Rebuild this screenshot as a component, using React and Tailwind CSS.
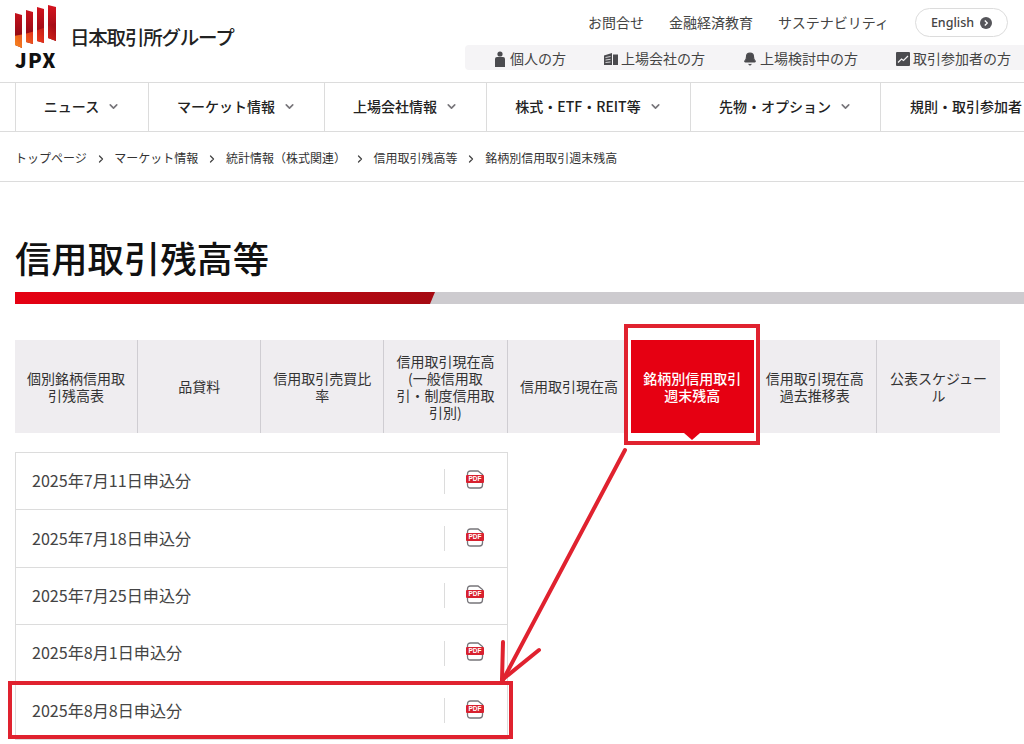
import React from "react";
import { ChevronDown, ChevronRight, Bell } from "lucide-react";

function Logo() {
  return (
    <div className="flex w-[55px] flex-col">
      <svg width="44" height="45" viewBox="14 4 44 45" className="ml-[-1px] mt-[4px]">
        <defs>
          <linearGradient id="jpxbase" x1="0" y1="0" x2="0" y2="1">
            <stop offset="0" stopColor="#d8141f" />
            <stop offset="0.75" stopColor="#8f0a14" />
          </linearGradient>
          <linearGradient id="jpxswoosh" gradientUnits="userSpaceOnUse" x1="50" y1="22" x2="18" y2="48">
            <stop offset="0" stopColor="#a80c16" />
            <stop offset="0.45" stopColor="#e2301a" />
            <stop offset="1" stopColor="#f58220" />
          </linearGradient>
          <clipPath id="jpxbars">
            <polygon points="15,13 22,15 22,48 15,45" />
            <polygon points="26,10 33,12 33,44 26,42" />
            <polygon points="37,7 44,9 44,43 37,41" />
            <polygon points="48,5 56,7 56,41 48,38" />
          </clipPath>
        </defs>
        <g clipPath="url(#jpxbars)">
          <rect x="14" y="4" width="44" height="45" fill="url(#jpxbase)" />
          <path d="M14 36Q35 33 57 22V49H14z" fill="url(#jpxswoosh)" />
        </g>
      </svg>
      <span className="mt-[1px] text-[20px] font-black leading-[20px] tracking-[1.2px] text-[#111]">JPX</span>
    </div>
  );
}

function PersonIcon() {
  return (
    <svg width="14" height="16" viewBox="0 0 14 16" fill="#4b4b4f">
      <circle cx="7" cy="3" r="2.6" />
      <path d="M2 8a2 2 0 0 1 2-2h6a2 2 0 0 1 2 2v8H2z" />
    </svg>
  );
}
function BuildingIcon() {
  return (
    <svg width="14" height="14" viewBox="0 0 14 14" fill="#4b4b4f">
      <path d="M0 3.5 8 1v12H0z" />
      <path d="M9 2.5h5V13H9z" />
      <path d="M1.5 5.5 6.5 4.5M1.5 8 6.5 7.3M1.5 10.5 6.5 10" stroke="#f5f4f6" strokeWidth="0.8" />
    </svg>
  );
}
function ChartIcon() {
  return (
    <svg width="14" height="14" viewBox="0 0 14 14">
      <rect width="14" height="14" rx="1" fill="#4b4b4f" />
      <path d="M2 10.5 5.5 7l2 1.5L12 4" stroke="#f5f4f6" strokeWidth="1.2" fill="none" />
    </svg>
  );
}
function PdfIcon() {
  return (
    <svg width="18" height="19" viewBox="0 0 18 19" className="block">
      <path d="M1.5 4q0-3 3-3h7.5l4.5 3.5v10.5q0 3-3 3h-9q-3 0-3-3z" fill="#fff" stroke="#77757a" strokeWidth="1.3" />
      <rect x="0" y="5" width="18" height="8" rx="1" fill="#d8212f" />
      <text x="9" y="11.4" textAnchor="middle" fontSize="6.5" fontWeight="700" fill="#fff" fontFamily="Liberation Sans, sans-serif">PDF</text>
    </svg>
  );
}

const nav = [
  ["ニュース", "w-[133px] justify-center", true],
  ["マーケット情報", "w-[176px] justify-center", true],
  ["上場会社情報", "w-[162px] justify-center", true],
  ["株式・ETF・REIT等", "w-[204px] justify-center", true],
  ["先物・オプション", "w-[190px] justify-center", true],
  ["規則・取引参加者", "w-[144px] justify-start pl-[29px]", false],
];

const crumbs = ["トップページ", "マーケット情報", "統計情報（株式関連）", "信用取引残高等", "銘柄別信用取引週末残高"];

const tabs = [
  "個別銘柄信用取引残高表",
  "品貸料",
  "信用取引売買比率",
  "信用取引現在高(一般信用取引・制度信用取引別)",
  "信用取引現在高",
  "銘柄別信用取引週末残高",
  "信用取引現在高過去推移表",
  "公表スケジュール",
];

const rows = ["2025年7月11日申込分", "2025年7月18日申込分", "2025年7月25日申込分", "2025年8月1日申込分", "2025年8月8日申込分"];

export default function App() {
  return (
    <div className="relative h-[744px] w-[1024px] overflow-hidden bg-white text-[#333] [font-family:'Noto_Sans_CJK_JP','Noto_Sans',sans-serif]">
      <header className="flex h-[83px] justify-between border-b border-[#dcdcdc]">
        <div className="flex pl-[15px]">
          <Logo />
          <span className="mt-[24px] text-[19.5px] font-medium leading-[26px] tracking-[-1.2px] text-[#222]">日本取引所グループ</span>
        </div>
        <div className="flex w-[559px] flex-col items-end">
          <div className="mt-[8px] flex h-[29px] items-center pr-[16px] text-[14px] text-[#444]">
            <span className="ml-[1px]">お問合せ</span>
            <span className="ml-[25px]">金融経済教育</span>
            <span className="ml-[25px]">サステナビリティ</span>
            <span className="ml-[26px] flex h-[29px] w-[93px] items-center justify-center gap-[6px] rounded-full border border-[#dcdcdc] pt-[1px] text-[12.5px] font-medium [font-family:'Noto_Sans',sans-serif]">
              English
              <svg width="12" height="12" viewBox="0 0 12 12">
                <circle cx="6" cy="6" r="6" fill="#55555a" />
                <path d="M4.8 3.5 7.3 6 4.8 8.5" stroke="#fff" strokeWidth="1.3" fill="none" />
              </svg>
            </span>
          </div>
          <div className="mt-[8px] flex h-[25px] w-full items-center rounded-l-[4px] bg-[#f5f4f6] pl-[28px] pt-[2px] text-[14px] text-[#444]">
            <span className="flex items-center gap-[3px]"><PersonIcon />個人の方</span>
            <span className="ml-[38px] flex items-center gap-[3px]"><BuildingIcon />上場会社の方</span>
            <span className="ml-[38px] flex items-center gap-[3px]"><Bell size={14} fill="#4b4b4f" stroke="#4b4b4f" />上場検討中の方</span>
            <span className="ml-[38px] flex items-center gap-[3px]"><ChartIcon />取引参加者の方</span>
          </div>
        </div>
      </header>

      <nav className="flex h-[49px] overflow-hidden border-b border-[#dcdcdc] pl-[15px]">
        {nav.map(([label, w, chev]) => (
          <div key={label} className={`flex h-full shrink-0 items-center gap-[8px] whitespace-nowrap border-l border-[#dcdcdc] pb-[2px] text-[14px] font-medium text-[#222] ${w}`}>
            <span>{label}</span>
            {chev && <ChevronDown size={13} strokeWidth={3} className="text-[#77757a]" />}
          </div>
        ))}
      </nav>

      <div className="flex h-[50px] items-center border-b border-[#dcdcdc] pl-[15px] pt-[2px] text-[12px] text-[#333]">
        {crumbs.map((c, i) => (
          <React.Fragment key={c}>
            {i > 0 && <ChevronRight size={12} strokeWidth={2.5} className="mx-[7.8px] mt-[2px] text-[#444]" />}
            <span>{c}</span>
          </React.Fragment>
        ))}
      </div>

      <h1 className="mt-[48px] pl-[15px] text-[36.3px] font-medium leading-[54px] text-[#111]">信用取引残高等</h1>

      <div className="relative mt-[8px] ml-[15px] h-[12px] bg-[#cdcbcf]">
        <div className="absolute left-0 top-0 h-full w-[420px] bg-[linear-gradient(90deg,#e60012,#a50a12)] [clip-path:polygon(0_0,100%_0,calc(100%-5px)_100%,0_100%)]" />
      </div>

      <div className="ml-[15px] mt-[36px] grid h-[93px] w-[985px] grid-cols-8 bg-[#efedf0]">
        {tabs.map((t, i) =>
          i === 5 ? (
            <div key={t} className="relative">
              <div className="absolute left-[-7px] top-[-16px] h-[121px] w-[136px] border-4 border-[#e0222f] bg-white" />
              <div className="relative flex h-full items-center justify-center bg-[#e60012] px-[12px] text-center text-[14px] font-medium leading-[17px] text-white">
                {t}
                <div className="absolute bottom-[-7px] left-1/2 h-0 w-0 -translate-x-1/2 border-x-[8px] border-t-[7px] border-x-transparent border-t-[#e60012]" />
              </div>
            </div>
          ) : (
            <div key={t} className={`flex items-center justify-center px-[12px] text-center text-[14px] leading-[17px] text-[#333] ${i === 7 || i === 4 ? "" : "border-r border-[#cfcdd2]"}`}>
              {t}
            </div>
          )
        )}
      </div>

      <div className="ml-[15px] mt-[19px] w-[493px] border-x border-t border-[#dcdcdc]">
        {rows.map((r) => (
          <div key={r} className="flex h-[57.4px] items-center border-b border-[#dcdcdc] pl-[16px] text-[16.1px] text-[#444]">
            <span className="flex-1 pb-[2px]">{r}</span>
            <span className="h-[25px] w-px bg-[#dcdcdc]" />
            <span className="ml-[21px] mr-[23px] mt-[-3px]"><PdfIcon /></span>
          </div>
        ))}
      </div>

      {/* Hand-drawn annotations over the page */}
      <div className="absolute left-[8px] top-[681px] h-[58px] w-[505px] border-4 border-[#e0222f]" />
      <svg className="absolute left-0 top-0" width="1024" height="744" fill="none" stroke="#e0222f" strokeWidth="4" strokeLinecap="round">
        <path d="M625 450 503 680" />
        <path d="M503 642 502 680 539 650" />
      </svg>
    </div>
  );
}
